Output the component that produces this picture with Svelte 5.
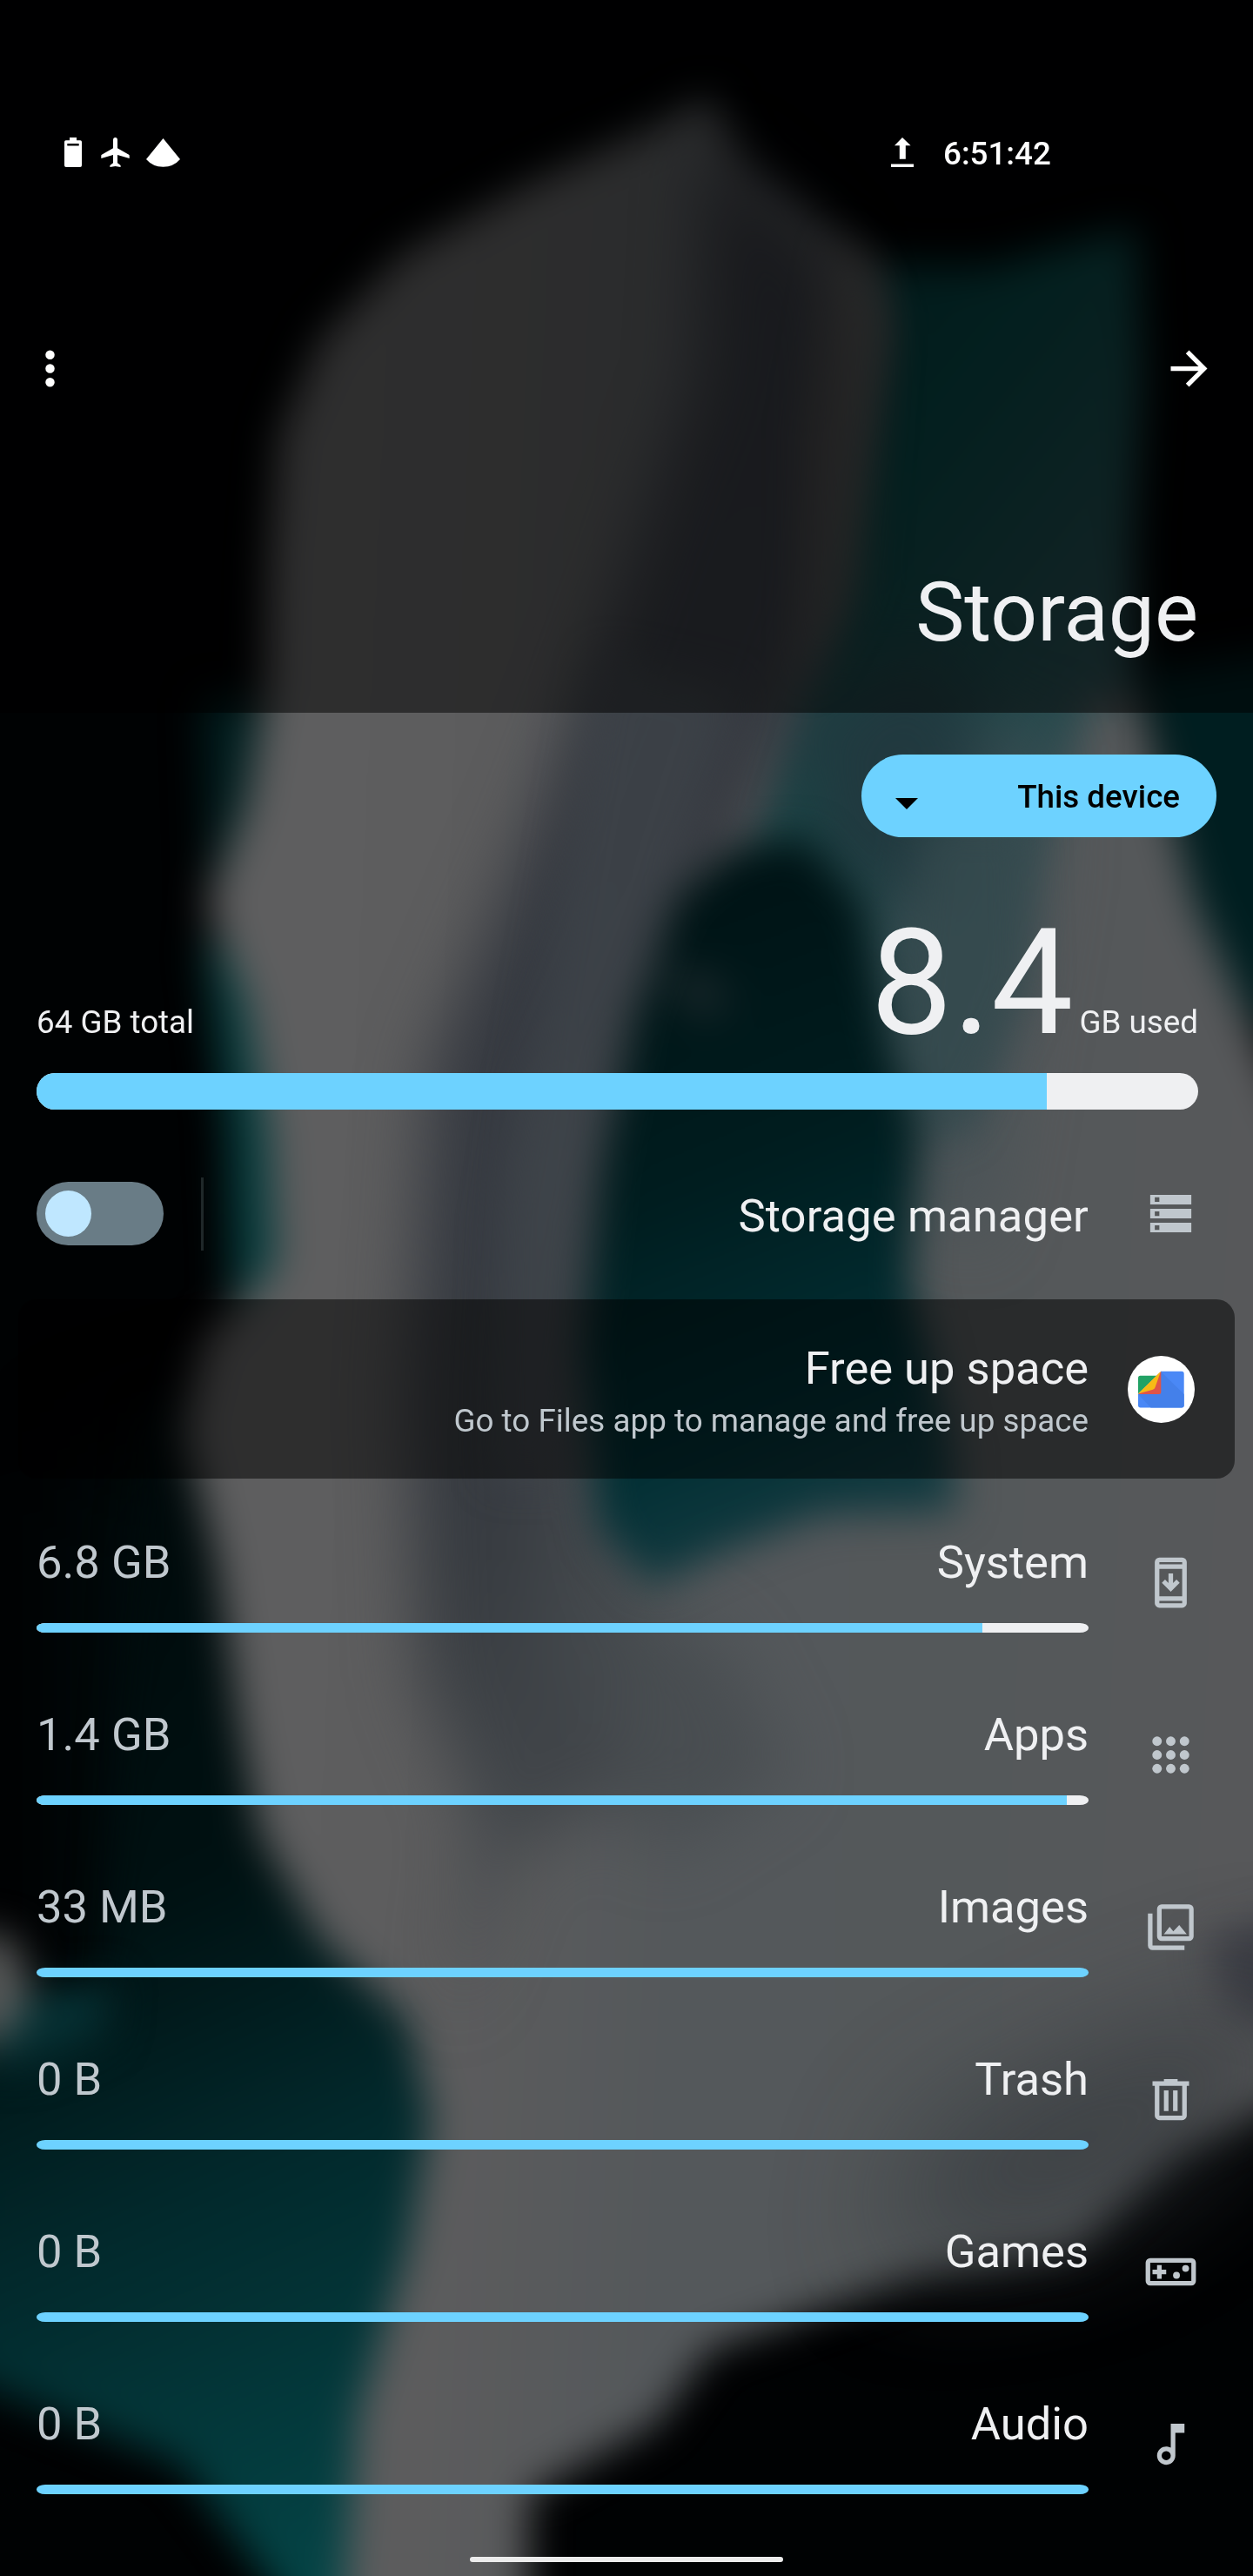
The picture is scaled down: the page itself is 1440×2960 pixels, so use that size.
<script>
  const categories = [
    { name: 'System', size: '6.8 GB', fill: 89.95, icon: 'system' },
    { name: 'Apps', size: '1.4 GB', fill: 97.95, icon: 'apps' },
    { name: 'Images', size: '33 MB', fill: 100, icon: 'images' },
    { name: 'Trash', size: '0 B', fill: 100, icon: 'trash' },
    { name: 'Games', size: '0 B', fill: 100, icon: 'games' },
    { name: 'Audio', size: '0 B', fill: 100, icon: 'audio' }
  ];
</script>

<div class="screen">
  <svg class="wallpaper" viewBox="0 0 763 1568" preserveAspectRatio="none" aria-hidden="true">
    <defs>
      <filter id="soft" x="-20%" y="-20%" width="140%" height="140%" color-interpolation-filters="sRGB"><feGaussianBlur stdDeviation="12" /></filter>
      <filter id="wide" x="-60%" y="-60%" width="220%" height="220%" color-interpolation-filters="sRGB"><feGaussianBlur stdDeviation="20" /></filter>
      <filter id="haze" x="-100%" y="-150%" width="300%" height="400%" color-interpolation-filters="sRGB"><feGaussianBlur stdDeviation="38" /></filter>
      <linearGradient id="tealRight" x1="0" y1="0" x2="0.6" y2="1">
        <stop offset="0" stop-color="#002c30" /><stop offset="0.35" stop-color="#08403f" /><stop offset="0.75" stop-color="#2a4a4e" /><stop offset="1" stop-color="#30494c" />
      </linearGradient>
      <linearGradient id="tealLeft" x1="0.3" y1="0" x2="0.5" y2="1">
        <stop offset="0" stop-color="#000809" /><stop offset="0.4" stop-color="#001112" /><stop offset="0.65" stop-color="#02292c" /><stop offset="1" stop-color="#044446" />
      </linearGradient>
      <linearGradient id="band" x1="0" y1="0" x2="0" y2="1">
        <stop offset="0" stop-color="#33353c" /><stop offset="0.5" stop-color="#363a41" /><stop offset="0.75" stop-color="#383c41" /><stop offset="1" stop-color="#4c5053" />
      </linearGradient>
      <linearGradient id="hollow" x1="0" y1="0" x2="0.2" y2="1">
        <stop offset="0" stop-color="#001012" /><stop offset="0.5" stop-color="#001d1f" /><stop offset="0.85" stop-color="#033035" /><stop offset="1" stop-color="#133a40" />
      </linearGradient>
      <linearGradient id="body" x1="0" y1="0" x2="1" y2="0.1">
        <stop offset="0.15" stop-color="#5e5e5f" /><stop offset="0.3" stop-color="#5c5c5d" /><stop offset="0.5" stop-color="#54585b" /><stop offset="0.75" stop-color="#54585a" /><stop offset="1" stop-color="#57585a" />
      </linearGradient>
    </defs>
    <rect width="763" height="1568" fill="#000203" />
    <path filter="url(#haze)" fill="#000e0f" d="M60 900 L200 860 L240 1200 L60 1260Z" />
    <g filter="url(#soft)">
      <path fill="#001e20" d="M695 410 L820 390 L820 660 L740 600Z" />
      <path fill="url(#tealRight)" d="M500 160 L600 162 L692 138 L696 230 L690 330 L692 430 L705 520 L720 700 L440 700 L440 430Z" />
      <path fill="#011f20" d="M124 425 L180 425 L180 540 L128 545Z" />
      <path fill="#063c3d" d="M124 570 L200 590 L200 800 L142 800 L138 690Z" />
      <path fill="url(#tealLeft)" d="M90 860 L180 860 L300 1250 L300 1600 L185 1600 L110 1500 L-30 1445 L-30 1250 L60 1230Z" />
      <path fill="url(#body)" d="M432 58 L400 76 L320 113 L245 155 L195 207 L170 265 L164 340 L162 420 L150 490 L126 550 L150 610 L164 690 L168 770 L125 815 L112 870 L132 950 L146 1050 L158 1115 L195 1180 L248 1230 L262 1290 L248 1370 L218 1470 L208 1600 L322 1600 L322 1518 L400 1475 L432 1430 L560 1385 L655 1368 L715 1310 L800 1270 L800 710 L765 630 L728 550 L706 470 L694 425 L665 425 L630 530 L590 690 L430 640 L455 520 L510 360 L542 200 L535 160 L500 138 L455 105Z" />
    </g>
    <g filter="url(#wide)">
      <path fill="url(#band)" d="M432 90 L465 115 L510 160 L518 230 L505 380 L450 510 L390 620 L370 900 L390 1000 L385 1090 L310 1130 L275 1230 L290 1110 L255 1020 L248 850 L262 650 L330 490 L382 350 L425 230Z" />
      <path fill="#445055" opacity="0.6" d="M590 440 L640 440 L636 540 L600 760 L540 720 L540 460Z" />
      <path fill="#21393f" d="M490 440 L560 390 L600 440 L575 560 L500 520Z" />
      <path fill="#464b4f" opacity="0.8" d="M330 700 L360 620 L366 960 L440 1000 L480 1080 L400 1130 L330 1000Z" />
    </g>
    <g filter="url(#soft)">
      <path fill="#3e444a" opacity="0.7" d="M365 400 L450 420 L415 530 L375 640 L352 760 L340 900 L300 900 L305 740 L330 600Z" />
      <path fill="#564f4c" opacity="0.4" d="M512 140 L540 190 L524 360 L490 420 L490 260Z" />
      <path fill="#34494d" opacity="0.75" d="M560 500 L625 500 L628 600 L585 690 L540 690Z" />
      <path fill="url(#hollow)" d="M412 545 L445 518 L490 510 L525 550 L542 640 L560 690 L554 780 L580 880 L582 920 L500 922 L440 945 L396 966 L364 930 L354 820 L366 710 L385 620Z" />
      <path fill="#30353a" opacity="0.5" d="M400 592 L430 590 L448 610 L425 622Z" />
      <path fill="#34363f" opacity="0.8" d="M735 1180 L800 1160 L800 1240 L748 1225Z" />
      <path fill="#053033" d="M-10 1215 L70 1205 L65 1240 L20 1258 L-10 1258Z" />
      <path fill="#5a5c5c" d="M-20 1175 L8 1180 L18 1212 L8 1235 L-20 1250Z" />
    </g>
    <path filter="url(#haze)" fill="#33383c" opacity="0.75" d="M560 1300 L660 1250 L800 1200 L740 1310 L660 1360 L540 1380Z" />
  </svg>

  <header class="header">
    <div class="status">
      <svg class="s-battery" viewBox="0 0 20 34"><path fill="#fff" fill-rule="evenodd" d="M6 0h8v3.3h4.2Q20 3.3 20 5v27q0 2-2 2H2q-2 0-2-2V5q0-1.7 1.8-1.7H6zM3.3 7v2.4h13.4V7z" /></svg>
      <svg class="s-plane" viewBox="0 0 33 34"><path fill="#fff" d="M16.5 0c-1.6 0-2.5 1.2-2.5 2.7v9.5L.9 19.8q-.6.4-.6 1V24L14 20v9.3l-3.6 2.6V34l6.1-1.1 6.1 1.1v-2.1L19 29.3V20l13.7 4v-3.2q0-.6-.6-1L19 12.2V2.7C19 1.2 18.1 0 16.5 0z" /></svg>
      <svg class="s-wifi" viewBox="0 0 39 33"><path fill="#fff" d="M19.5 0L0 24Q7.500 32.700 19.500 32.700T39 24z" /></svg>
      <svg class="s-upload" viewBox="0 0 26 34"><path fill="#fff" d="M13 0l9.600 9.300h-5.800v15.400H9.800V9.300H4zM0 30.600h26V34H0z" /></svg>
      <span class="clock">6:51:42</span>
    </div>
    <div class="appbar">
      <svg class="icon" viewBox="0 0 24 24"><path fill="#fff" d="M12 8a2 2 0 1 0 0-4 2 2 0 0 0 0 4zm0 2a2 2 0 1 0 0 4 2 2 0 0 0 0-4zm0 6a2 2 0 1 0 0 4 2 2 0 0 0 0-4z" /></svg>
      <svg class="icon" viewBox="0 0 24 24"><path fill="#fff" d="M12 4l-1.410 1.410L16.170 11H4v2h12.170l-5.580 5.590L12 20l8-8z" /></svg>
    </div>
    <h1>Storage</h1>
  </header>

  <main>
    <button class="device">
      <svg viewBox="0 0 26 13"><path d="M0 0h26L13 13z" /></svg>
      <span>This device</span>
    </button>

    <div class="summary">
      <span class="total">64 GB total</span>
      <span><span class="used">8.4</span><span class="unit">GB used</span></span>
    </div>
    <div class="meter"><div class="meter-fill"></div></div>

    <section class="manager">
      <div class="switch"><div class="thumb"></div></div>
      <div class="divider"></div>
      <span class="label">Storage manager</span>
      <svg class="icon tint" viewBox="0 0 24 24"><path fill-rule="evenodd" d="M3 3.800h18V8H3zM5 4.900v2h2v-2zM3 9.900h18v4.200H3zM5 11v2h2v-2zM3 16h18v4.200H3zM5 17.100v2h2v-2z" /></svg>
    </section>

    <section class="card">
      <div class="card-text">
        <span class="card-title">Free up space</span>
        <span class="card-sub">Go to Files app to manage and free up space</span>
      </div>
      <svg class="files" viewBox="0 0 77 77">
        <circle cx="38.500" cy="38.500" r="38.500" fill="#fff" />
        <path fill="#4a88f6" d="M38 17.700H62q2.700 0 2.700 2.700V56.800q0 2.700-2.700 2.700H14.700Q12 59.500 12 56.800V43.500L38 40z" />
        <path fill="#4480ea" d="M38 18L64.700 44V56.800q0 2.700-2.700 2.700H26.500L12 44l26-1z" />
        <path fill="#22a265" d="M14.500 22.700H33.500L12 43.500V25.200q0-2.500 2.500-2.500z" />
        <path fill="#df5448" d="M38.300 17.800V41.500q0 2.500-2.500 2.500H12z" />
        <path fill="#f7ba15" d="M37.900 17.900L12 43.600 29 38.700Q31 38 31.600 36z" />
      </svg>
    </section>

    {#each categories as item}
      <section class="row">
        <div class="row-main">
          <div class="row-text">
            <span class="value">{item.size}</span>
            <span>{item.name}</span>
          </div>
          <div class="bar"><div class="bar-fill" style="width: {item.fill}%"></div></div>
        </div>
        <svg class="icon tint" viewBox="0 0 24 24">
          {#if item.icon === 'system'}
            <path fill-rule="evenodd" d="M7 1h10a2 2 0 0 1 2 2v18a2 2 0 0 1-2 2H7a2 2 0 0 1-2-2V3a2 2 0 0 1 2-2zM7 3v1h10V3zM7 6v12h10V6zM7 20v1h10v-1z" />
            <path d="M11 8h2v4.200l1.500-1.500 1.400 1.400L12 16l-3.900-3.900 1.400-1.400 1.500 1.500z" />
          {:else if item.icon === 'apps'}
            {#each [6, 12, 18] as cy}
              {#each [6, 12, 18] as cx}
                <circle {cx} {cy} r="2.080" />
              {/each}
            {/each}
          {:else if item.icon === 'images'}
            <path fill-rule="evenodd" d="M8 2h12a2 2 0 0 1 2 2v12a2 2 0 0 1-2 2H8a2 2 0 0 1-2-2V4a2 2 0 0 1 2-2zM8 4v12h12V4z" />
            <path d="M2 6h2v14h14v2H4a2 2 0 0 1-2-2zM9 15l2.500-3.200 1.600 2L15.700 11 19 15z" />
          {:else if item.icon === 'trash'}
            <path fill-rule="evenodd" d="M9 3h6v1h5v2h-1v13a2 2 0 0 1-2 2H7a2 2 0 0 1-2-2V6H4V4h5zM7 6v13h10V6z" />
            <path d="M9 8h2v9H9zM13 8h2v9h-2z" />
          {:else if item.icon === 'games'}
            <path fill-rule="evenodd" d="M3 6h18a2 2 0 0 1 2 2v8a2 2 0 0 1-2 2H3a2 2 0 0 1-2-2V8a2 2 0 0 1 2-2zM3 8v8h18V8z" />
            <path d="M6 9h2v2h2v2H8v2H6v-2H4v-2h2z" />
            <circle cx="14.500" cy="13.500" r="1.500" /><circle cx="18.500" cy="10.500" r="1.500" />
          {:else}
            <path fill-rule="evenodd" d="M12 3h6v4h-4v10a4 4 0 1 1-2-3.450zM10 15a2 2 0 1 0 0 4 2 2 0 0 0 0-4z" />
          {/if}
        </svg>
      </section>
    {/each}
  </main>

  <div class="home"></div>
</div>

<style>
  :global(body) { background: #000; }
  .screen {
    position: relative;
    display: flex;
    flex-direction: column;
    width: 1440px;
    height: 2960px;
    overflow: hidden;
    font-family: Roboto, "Liberation Sans", sans-serif;
    font-size: 52.5px;
    line-height: 60px;
    color: #eff0f2;
  }
  svg { display: block; flex: none; }
  .wallpaper { position: absolute; inset: 0; width: 100%; height: 100%; }
  .header, main, .home { position: relative; }
  .header { box-sizing: border-box; height: 819px; padding-top: 143px; background: rgba(0, 0, 0, 0.51); }
  .status { display: flex; align-items: center; height: 64px; padding-left: 74px; }
  .s-battery { width: 20px; height: 34px; }
  .s-plane { width: 33px; height: 34px; margin-left: 22px; }
  .s-wifi { width: 39px; height: 33px; margin-left: 19px; }
  .s-upload { width: 26px; height: 34px; margin-left: 817px; }
  .clock { margin-left: 34px; padding-top: 3px; font-size: 36.750px; font-weight: 500; color: #fff; }
  .appbar { display: flex; justify-content: space-between; align-items: center; height: 148px; margin-top: 142px; padding: 0 42px 0 26px; }
  .icon { width: 63px; height: 63px; }
  .tint { fill: #c0c7cd; }
  h1 { margin: 152px 63px 0 0; font-size: 94.500px; line-height: 110px; font-weight: 400; text-align: right; }
  main { display: flex; flex-direction: column; }
  .device {
    display: flex;
    align-items: center;
    justify-content: space-between;
    align-self: flex-end;
    width: 408px;
    height: 95px;
    margin: 48px 42px 0 0;
    padding: 0 42px 0 39px;
    border: 0;
    border-radius: 48px;
    background: #6dd2ff;
    color: #000;
    font: 500 36.750px/43px Roboto, sans-serif;
  }
  .device svg { width: 26px; height: 13px; margin-top: 18px; }
  .device span { padding-top: 1px; }
  .summary { display: flex; justify-content: space-between; align-items: baseline; height: 197px; margin: 69px 63px 5px 42px; }
  .used { font-size: 168px; line-height: 197px; }
  .total, .unit { font-size: 36.750px; line-height: 43px; }
  .unit { margin-left: 7px; }
  .meter { height: 42px; margin: 0 63px 0 42px; border-radius: 21px; overflow: hidden; background: #eff0f2; }
  .meter-fill { width: 1161px; height: 100%; background: #6dd2ff; }
  .manager { display: flex; align-items: center; box-sizing: border-box; height: 218px; padding: 21px 63px 0 42px; }
  .switch { box-sizing: border-box; width: 146px; height: 73px; padding: 10px; border-radius: 37px; background: #697c86; }
  .thumb { width: 53px; height: 53px; border-radius: 50%; background: #bfe7ff; }
  .divider { width: 3px; height: 84px; margin-left: 43px; background: rgba(192, 215, 225, 0.160); }
  .label { margin-left: auto; padding: 5px 63px 0 0; letter-spacing: 0.12px; }
  .card {
    display: flex;
    align-items: center;
    justify-content: flex-end;
    height: 206px;
    margin: 0 21px;
    border-radius: 21px;
    background: rgba(0, 0, 0, 0.510);
  }
  .card-text { display: flex; flex-direction: column; gap: 9px; text-align: right; padding-top: 4px; margin-right: 45px; }
  .card-sub { font-size: 36.750px; line-height: 43px; letter-spacing: 0.04px; color: #c0c8ce; }
  .files { width: 77px; height: 77px; margin-right: 46px; }
  .row { display: flex; align-items: flex-start; height: 198px; padding-left: 42px; }
  .row-main { width: 1209px; padding-top: 66px; }
  .row-text { display: flex; justify-content: space-between; }
  .value { color: #c0c8ce; }
  .bar { height: 10.500px; margin-top: 40px; border-radius: 10px / 5.250px; overflow: hidden; background: #eff0f2; }
  .bar-fill { height: 100%; background: #6dd2ff; }
  .row .icon { margin: 88px 0 0 63px; }
  .home { width: 360px; height: 6px; margin: 51px auto 0; border-radius: 3px; background: #ececec; }
</style>
